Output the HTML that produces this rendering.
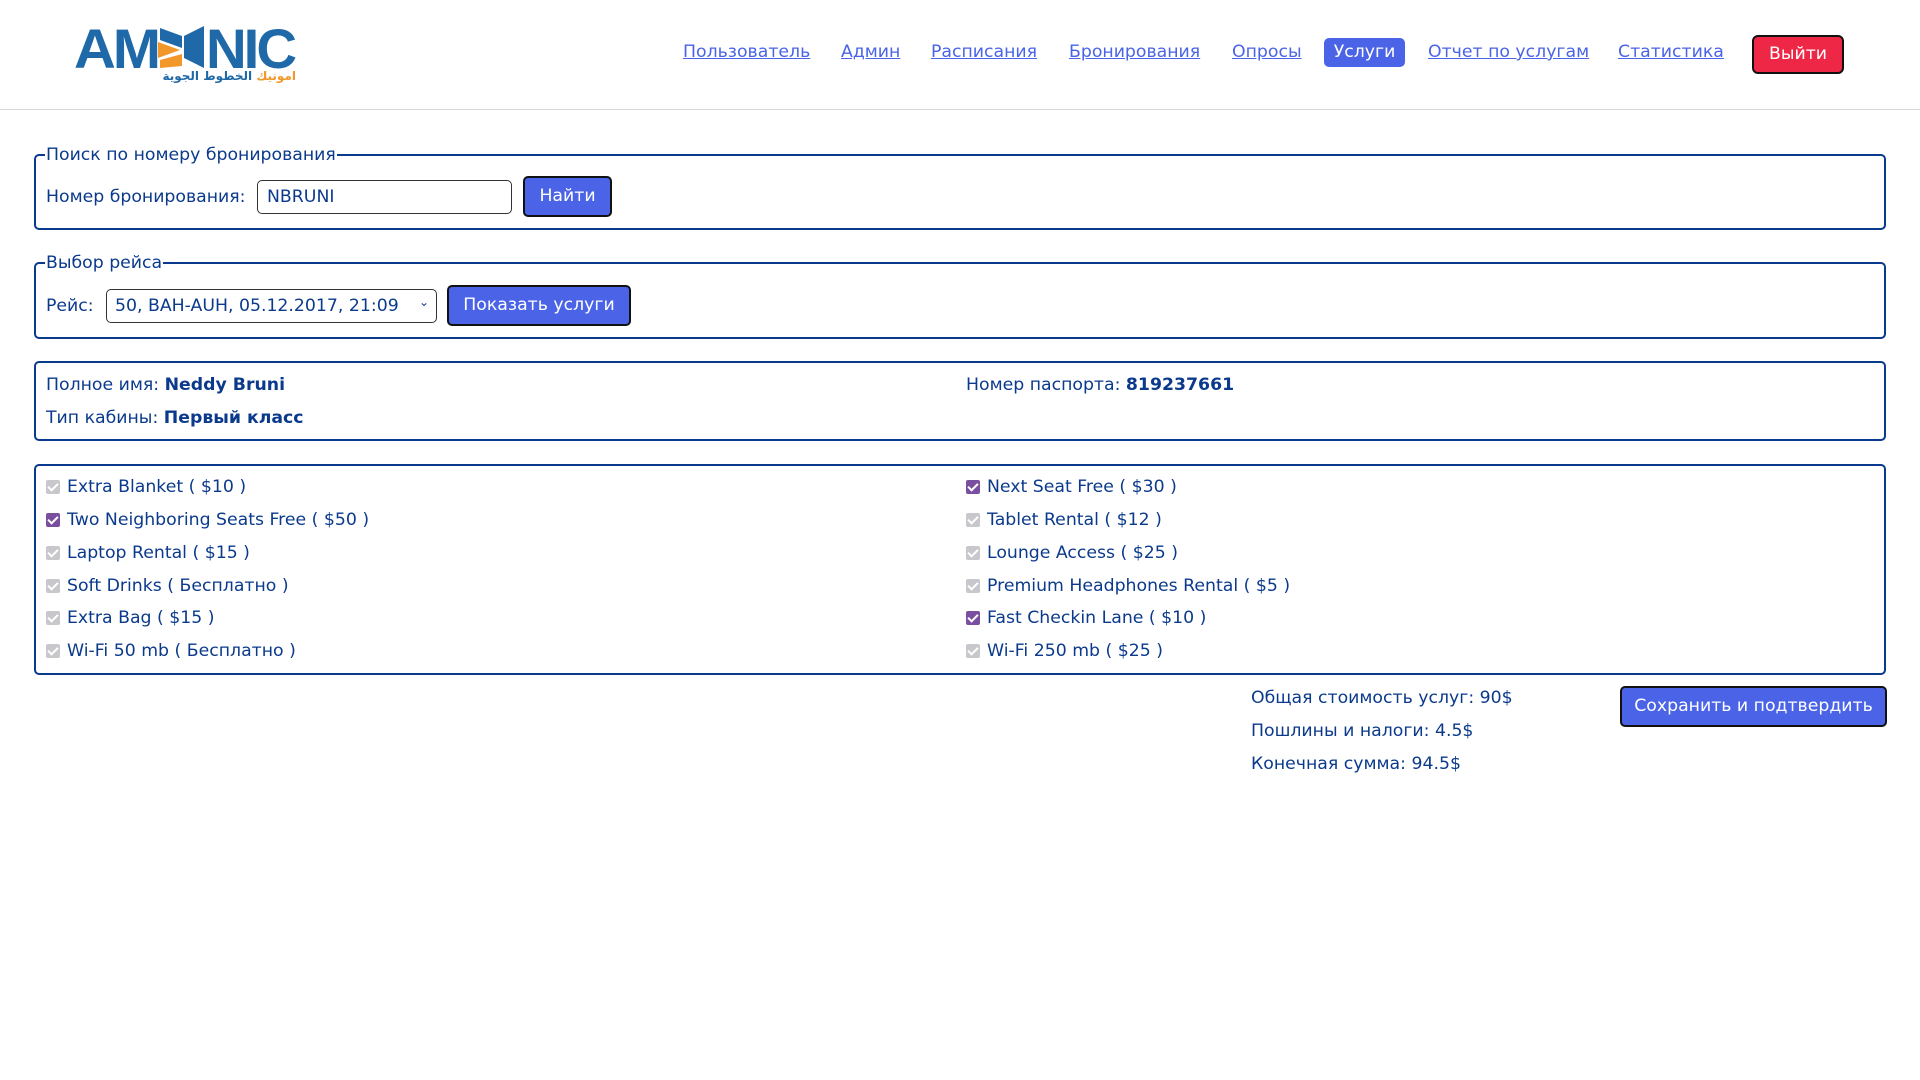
<!DOCTYPE html>
<html><head><meta charset="utf-8"><style>
*{box-sizing:border-box;margin:0;padding:0}
body{width:1920px;height:1080px;background:#fff;font-family:"DejaVu Sans","Liberation Sans",sans-serif;font-size:17.3px;color:#0b3a8c;position:relative;overflow:hidden}
.a{position:absolute;white-space:nowrap}
.hdr{position:absolute;left:0;top:0;width:1920px;height:110px;border-bottom:1px solid #d6d6d6}
.nav{color:#4a63e7;text-decoration:underline;font-size:17.3px;top:42px}
.box{position:absolute;left:34px;width:1852px;border:2.5px solid #0a3a8e;border-radius:5px}
.leg{position:absolute;background:#fff;padding:0 1px;line-height:20px}
.btn{position:absolute;background:#4a63e7;color:#fff;border:2px solid #111;border-radius:5px;text-align:center}
.cb{position:absolute;width:14px;height:14px;border-radius:2px;background:#c8c8cc}
.cb.on{background:#7b4fa0}
.cb::after{content:"";position:absolute;left:4px;top:1px;width:4px;height:8px;border:solid #fff;border-width:0 2px 2px 0;transform:rotate(45deg)}
</style></head><body>
<div class="hdr"></div>
<svg class="a" style="left:74px;top:20px" width="225" height="56" viewBox="0 0 225 56">
<text x="0" y="48" font-family="Liberation Sans" font-weight="bold" font-size="56" fill="#1f69a8" letter-spacing="-3" textLength="84" lengthAdjust="spacingAndGlyphs">AM</text>
<polygon points="86,8 108,16 108,28 86,20" fill="#1f69a8"/>
<polygon points="110,16 130,6 130,48 110,38" fill="#1f69a8"/>
<polygon points="84,22 106,30 84,38" fill="#f2982b"/>
<polygon points="86,40 108,34 108,46 86,48" fill="#f2982b"/>
<text x="132" y="48" font-family="Liberation Sans" font-weight="bold" font-size="56" fill="#1f69a8" letter-spacing="-3" textLength="88" lengthAdjust="spacingAndGlyphs">NIC</text>
</svg>
<div class="a" dir="rtl" style="left:160px;top:68px;width:136px;text-align:right;font-size:12px;font-weight:bold;color:#1f69a8;line-height:16px"><span style="color:#f2982b">امونيك</span> الخطوط الجوية</div>
<span class="a nav" style="left:683px">Пользователь</span>
<span class="a nav" style="left:841px">Админ</span>
<span class="a nav" style="left:931px">Расписания</span>
<span class="a nav" style="left:1069px">Бронирования</span>
<span class="a nav" style="left:1232px">Опросы</span>
<span class="a" style="left:1324px;top:38px;width:81px;height:29px;background:#4a63e7;color:#fff;border-radius:5px;text-align:center;line-height:28px">Услуги</span>
<span class="a nav" style="left:1428px">Отчет по услугам</span>
<span class="a nav" style="left:1618px">Статистика</span>
<span class="a" style="left:1752px;top:35px;width:92px;height:39px;background:#ef2746;color:#fff;border:2px solid #111;border-radius:6px;text-align:center;line-height:35px">Выйти</span>

<div class="box" style="top:154px;height:76px"></div>
<span class="a leg" style="left:45px;top:145px">Поиск по номеру бронирования</span>
<span class="a" style="left:46px;top:187px">Номер бронирования:</span>
<div class="a" style="left:257px;top:180px;width:255px;height:34px;border:1px solid #333;border-radius:5px;padding-left:9px;line-height:32px">NBRUNI</div>
<div class="btn" style="left:523px;top:176px;width:89px;height:41px;line-height:37px">Найти</div>

<div class="box" style="top:262px;height:77px"></div>
<span class="a leg" style="left:45px;top:253px">Выбор рейса</span>
<span class="a" style="left:46px;top:296px">Рейс:</span>
<div class="a" style="left:106px;top:289px;width:331px;height:34px;border:1px solid #333;border-radius:5px;padding-left:8px;line-height:32px">50, BAH-AUH, 05.12.2017, 21:09 <span style="position:absolute;right:7px;top:-4px;font-size:12px">&#8964;</span></div>
<div class="btn" style="left:447px;top:285px;width:184px;height:41px;line-height:37px">Показать услуги</div>

<div class="box" style="top:361px;height:80px"></div>
<span class="a" style="left:46px;top:375px">Полное имя: <b>Neddy Bruni</b></span>
<span class="a" style="left:966px;top:375px">Номер паспорта: <b>819237661</b></span>
<span class="a" style="left:46px;top:408px">Тип кабины: <b>Первый класс</b></span>

<div class="box" style="top:464px;height:211px"></div>
<div class="cb" style="left:46px;top:480px"></div><span class="a" style="left:67px;top:477px">Extra Blanket ( $10 )</span>
<div class="cb on" style="left:46px;top:513px"></div><span class="a" style="left:67px;top:510px">Two Neighboring Seats Free ( $50 )</span>
<div class="cb" style="left:46px;top:546px"></div><span class="a" style="left:67px;top:543px">Laptop Rental ( $15 )</span>
<div class="cb" style="left:46px;top:579px"></div><span class="a" style="left:67px;top:576px">Soft Drinks ( Бесплатно )</span>
<div class="cb" style="left:46px;top:611px"></div><span class="a" style="left:67px;top:608px">Extra Bag ( $15 )</span>
<div class="cb" style="left:46px;top:644px"></div><span class="a" style="left:67px;top:641px">Wi-Fi 50 mb ( Бесплатно )</span>
<div class="cb on" style="left:966px;top:480px"></div><span class="a" style="left:987px;top:477px">Next Seat Free ( $30 )</span>
<div class="cb" style="left:966px;top:513px"></div><span class="a" style="left:987px;top:510px">Tablet Rental ( $12 )</span>
<div class="cb" style="left:966px;top:546px"></div><span class="a" style="left:987px;top:543px">Lounge Access ( $25 )</span>
<div class="cb" style="left:966px;top:579px"></div><span class="a" style="left:987px;top:576px">Premium Headphones Rental ( $5 )</span>
<div class="cb on" style="left:966px;top:611px"></div><span class="a" style="left:987px;top:608px">Fast Checkin Lane ( $10 )</span>
<div class="cb" style="left:966px;top:644px"></div><span class="a" style="left:987px;top:641px">Wi-Fi 250 mb ( $25 )</span>

<span class="a" style="left:1251px;top:688px">Общая стоимость услуг: 90$</span>
<span class="a" style="left:1251px;top:721px">Пошлины и налоги: 4.5$</span>
<span class="a" style="left:1251px;top:754px">Конечная сумма: 94.5$</span>
<div class="btn" style="left:1620px;top:686px;width:267px;height:41px;line-height:37px">Сохранить и подтвердить</div>
</body></html>
